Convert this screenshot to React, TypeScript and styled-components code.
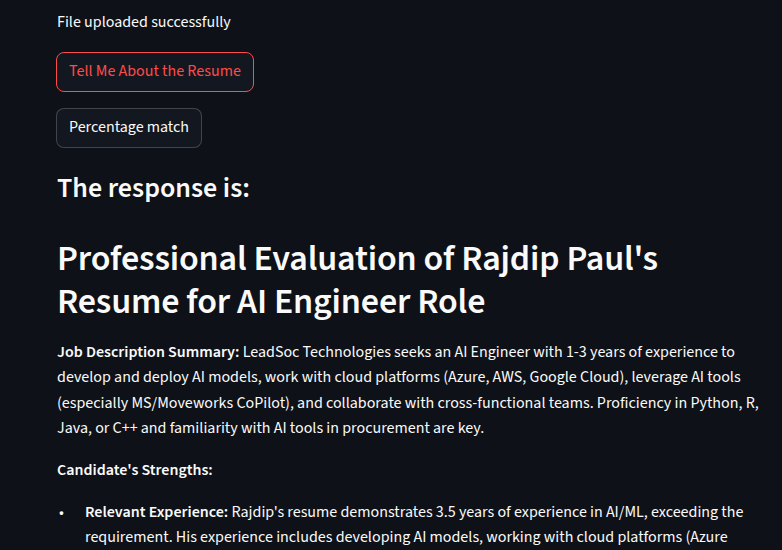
import React from "react";
import styled, { createGlobalStyle } from "styled-components";

const Global = createGlobalStyle`
  html, body {
    margin: 0;
    padding: 0;
    background: #0e1117;
  }
  body {
    font-family: "Source Sans 3", "Source Sans Pro", "Noto Sans", sans-serif;
    color: #fafafa;
    -webkit-font-smoothing: antialiased;
  }
  *, *::before, *::after { box-sizing: border-box; }
`;

const Main = styled.main`
  display: flex;
  flex-direction: column;
  gap: 16px;
  width: 769px;
  padding: 10px 0 40px 57px;
`;

const Text = styled.div`
  font-size: 16px;
  line-height: 1.6;
`;

const ButtonWrap = styled.div`
  display: flex;
  margin-left: -1px;
`;

const Button = styled.button<{ $active?: boolean }>`
  display: inline-flex;
  align-items: center;
  justify-content: center;
  min-height: 40px;
  padding: 4px 12px;
  margin: 0;
  border-radius: 8px;
  font-family: inherit;
  font-size: 16px;
  line-height: 1.6;
  background: #13171f;
  color: ${(p) => (p.$active ? "#ff4b4b" : "#fafafa")};
  border: 1px solid ${(p) => (p.$active ? "#ff4b4b" : "rgba(250, 250, 250, 0.2)")};
  cursor: pointer;
`;

const SubHeading = styled.h3`
  margin: 0;
  padding: 8px 0 16px;
  font-size: 28px;
  font-weight: 600;
  line-height: 1.2;
`;

const Markdown = styled.div`
  font-size: 16px;
  line-height: 1.6;
`;

const Title = styled.h1`
  margin: 0;
  padding: 0 0 16px;
  font-size: 36px;
  font-weight: 600;
  line-height: 1.2;
  letter-spacing: -0.005em;
`;

const Para = styled.p`
  margin: 0 0 16px;
`;

const Strong = styled.strong`
  font-weight: 600;
`;

const List = styled.ul`
  list-style: none;
  margin: 0;
  padding: 0;
`;

const Item = styled.li`
  padding-left: 28px;
  &::before {
    content: "•";
    display: inline-block;
    width: 28px;
    margin-left: -28px;
    padding-left: 2px;
  }
`;

export default function App() {
  return (
    <>
      <Global />
      <Main>
        <Text>File uploaded successfully</Text>
        <ButtonWrap>
          <Button $active>Tell Me About the Resume</Button>
        </ButtonWrap>
        <ButtonWrap>
          <Button>Percentage match</Button>
        </ButtonWrap>
        <SubHeading>The response is:</SubHeading>
        <Markdown>
          <Title>Professional Evaluation of Rajdip Paul's Resume for AI Engineer Role</Title>
          <Para>
            <Strong>Job Description Summary:</Strong> LeadSoc Technologies seeks an AI Engineer with 1-3 years
            of experience to develop and deploy AI models, work with cloud platforms (Azure, AWS, Google Cloud),
            leverage AI tools (especially MS/Moveworks CoPilot), and collaborate with cross-functional teams.
            Proficiency in Python, R, Java, or C++ and familiarity with AI tools in procurement are key.
          </Para>
          <Para>
            <Strong>Candidate's Strengths:</Strong>
          </Para>
          <List>
            <Item>
              <Strong>Relevant Experience:</Strong> Rajdip's resume demonstrates 3.5 years of experience in
              AI/ML, exceeding the requirement. His experience includes developing AI models, working with cloud
              platforms (Azure Machine Learning, AWS SageMaker), and building end-to-end machine learning
              solutions.
            </Item>
          </List>
        </Markdown>
      </Main>
    </>
  );
}
